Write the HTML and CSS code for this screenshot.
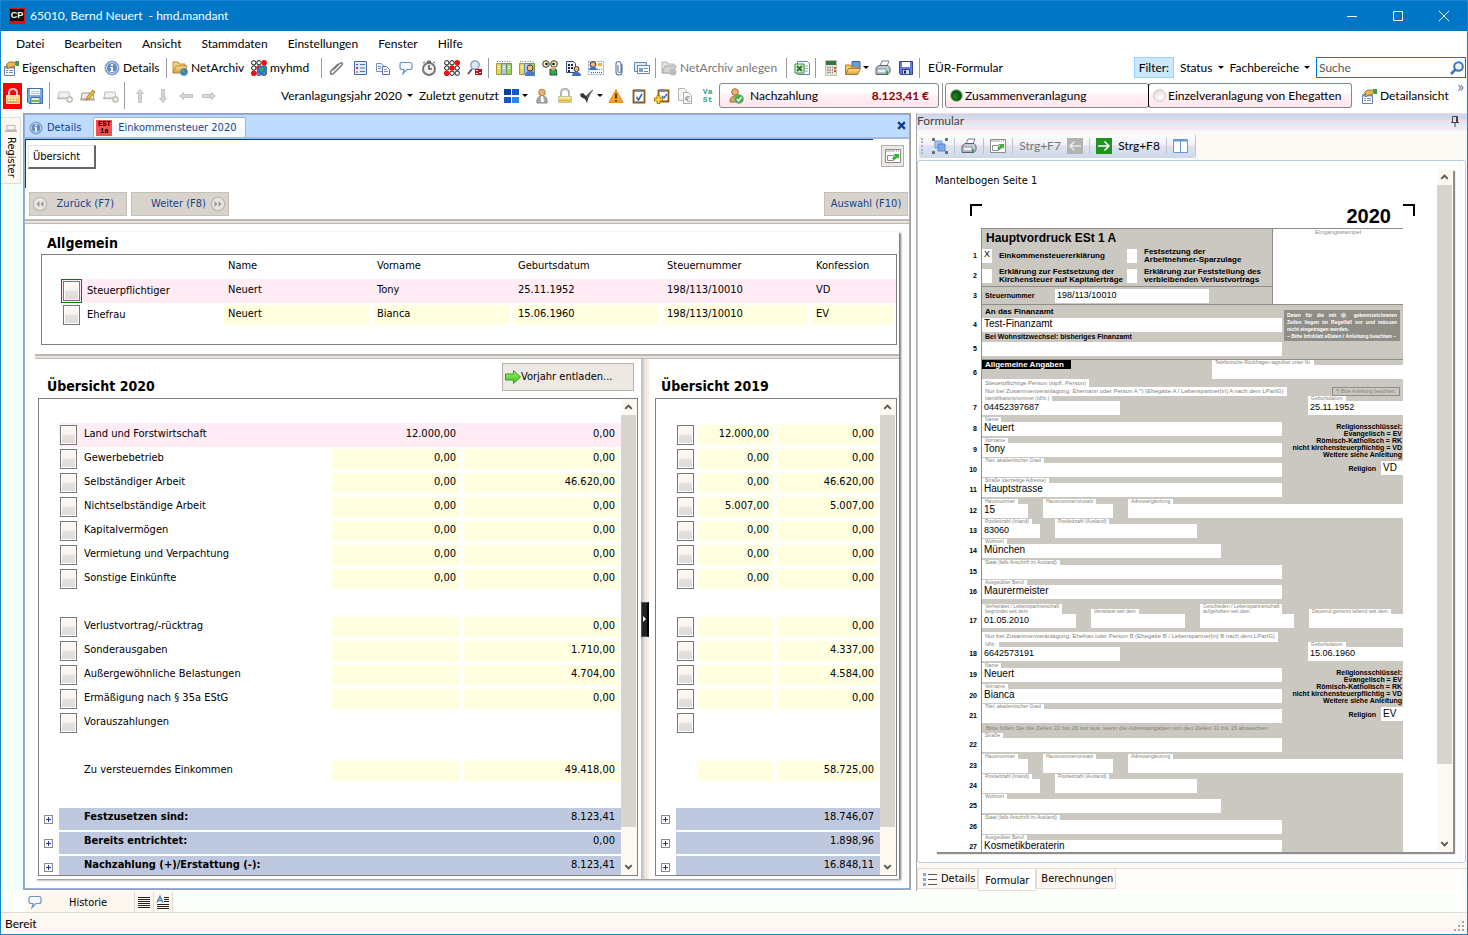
FILE: index.html
```html
<!DOCTYPE html>
<html lang="de">
<head>
<meta charset="utf-8">
<title>65010, Bernd Neuert - hmd.mandant</title>
<link rel="stylesheet" href="styles.css">
</head>
<body>
<svg class="sprite" aria-hidden="true">
  <defs>
    <linearGradient id="g-blue" x1="0" y1="0" x2="0" y2="1"><stop offset="0" stop-color="#8fb4e6"/><stop offset="1" stop-color="#3f6db5"/></linearGradient>
    <linearGradient id="g-gold" x1="0" y1="0" x2="0" y2="1"><stop offset="0" stop-color="#fbe39a"/><stop offset="1" stop-color="#d99f35"/></linearGradient>
    <linearGradient id="g-green" x1="0" y1="0" x2="0" y2="1"><stop offset="0" stop-color="#a5f060"/><stop offset="1" stop-color="#35c525"/></linearGradient>
  </defs>
  <symbol id="props" viewBox="0 0 16 16"><path d="M1.500 6.500h10v9h-10z" fill="#fff" stroke="#6b7f9e"/><path d="M1.500 6.500h10v2h-10z" fill="#7c9cd0"/><path d="M3 10.500h2M3 12.500h2M6 10.500h4M6 12.500h4" stroke="#6d8fc4"/><path d="M3 5l3-3h5l2 2-2 3H7l-2 2-1-1 1-2z" fill="#e8b650" stroke="#8a6425" stroke-width=".8"/><path d="M12 1h4v5h-3z" fill="#3f9a55"/></symbol>
  <symbol id="info" viewBox="0 0 16 16"><circle cx="8" cy="8" r="7" fill="#5f8bc4" stroke="#88a7cf"/><circle cx="8" cy="8" r="5.500" fill="none" stroke="#d7e4f5"/><path d="M7 4h2v2H7zM6 7h3v4h1v1H6v-1h1V8H6z" fill="#fff"/></symbol>
  <symbol id="netarchiv" viewBox="0 0 16 16"><path d="M1 13V2h5l1 2h6v3" fill="#f6d47c" stroke="#b78a35"/><path d="M1 13l3-7h11l-3 7z" fill="url(#g-gold)" stroke="#b78a35"/><circle cx="12" cy="12" r="3.800" fill="#3b7bd0"/><path d="M10 9l3 1-1 2-2 1-1-2zM13 12l2 1-2 2z" fill="#53b04a"/></symbol>
  <symbol id="dice" viewBox="0 0 16 16"><g fill="#fff" stroke="#111"><circle cx="2.800" cy="2.800" r="2.200"/><circle cx="8" cy="2.800" r="2.200"/><circle cx="2.800" cy="8" r="2.200"/><circle cx="13.200" cy="8" r="2.200"/><circle cx="8" cy="13.200" r="2.200"/><circle cx="13.200" cy="13.200" r="2.200"/></g><g fill="#f01010"><circle cx="13.200" cy="2.800" r="2.800"/><circle cx="8" cy="8" r="2.800"/><circle cx="2.800" cy="13.200" r="2.800"/></g></symbol>
  <symbol id="myhmd" viewBox="0 0 16 16"><use href="#dice"/><circle cx="11" cy="10.500" r="5" fill="#2f6fd0"/><path d="M8 8l4-1 1 3-3 2zM12 12l3 0-2 3z" fill="#3ba64a"/></symbol>
  <symbol id="clip" viewBox="0 0 16 16"><path d="M4 10l6-6q2-2 3-1t-1 3l-7 7q-2 2-3 1t0-3l7-7" fill="none" stroke="#777" stroke-width="1.500"/></symbol>
  <symbol id="list" viewBox="0 0 16 16"><path d="M2.500 1.500h12v13h-12z" fill="#e1ebfa" stroke="#4a6ba5"/><path d="M4 4h2v1H4z" fill="#1a4fb0"/><path d="M4 7h2v2H4z" fill="#d33"/><path d="M4 11h2v2H4z" fill="#e8a020"/><path d="M8 4.500h5M8 8h5M8 11.500h5" stroke="#5573a8"/></symbol>
  <symbol id="copy" viewBox="0 0 16 16"><path d="M1.500 3.500h5l2 2v6h-7z" fill="#eef3fb" stroke="#7d94be"/><path d="M7.500 6.500h4l3 3v5h-7z" fill="#f7faff" stroke="#5670a5"/><path d="M9 9.500h3M9 11.500h4M3 6.500h3M3 8.500h3" stroke="#7d94be"/></symbol>
  <symbol id="speech" viewBox="0 0 16 16"><path d="M4 2.500h8q2 0 2 2v3q0 2-2 2H9l-4 4 1-4H4q-2 0-2-2v-3q0-2 2-2z" fill="#f6f9ff" stroke="#6b95c8" stroke-width="1.200"/></symbol>
  <symbol id="watch" viewBox="0 0 16 16"><circle cx="8" cy="9" r="6" fill="#f2f2ee" stroke="#777" stroke-width="2"/><path d="M6.500 1h3v2h-3zM2 3l2-1M14 3l-2-1" stroke="#666" fill="#888"/><path d="M8 5v4h3" fill="none" stroke="#222" stroke-width="1.200"/></symbol>
  <symbol id="find" viewBox="0 0 16 16"><circle cx="8" cy="5" r="4.200" fill="#dbe8f5" stroke="#8a97a8" stroke-width="1.300"/><path d="M5 9l-4 5" stroke="#555" stroke-width="2"/><path d="M8 9h7v6H8z" fill="#c01010"/><path d="M9 10h2v1H9zM12 12h2v1h-2zM9 13h2v1H9z" fill="#fff"/></symbol>
  <symbol id="binders" viewBox="0 0 16 16"><path d="M.500 3.500h5v11h-5z" fill="#e9d552" stroke="#a89a35"/><path d="M5.500 3.500h5v11h-5z" fill="#a8c2ea" stroke="#6d8cc0"/><path d="M10.500 3.500h5v11h-5z" fill="#9fd06c" stroke="#6c9d40"/><path d="M1 1.500h14" stroke="#777" stroke-dasharray="1 1.500"/><path d="M2 6.500h2M2 8.500h2M7 6.500h2M7 8.500h2M12 6.500h2M12 8.500h2" stroke="#fff"/></symbol>
  <symbol id="binders-user" viewBox="0 0 16 16"><use href="#binders"/><circle cx="11" cy="8" r="3" fill="#f0bd8d" stroke="#573618"/><path d="M6 16q0-5 5-5t5 5z" fill="#4a78c8"/></symbol>
  <symbol id="owl" viewBox="0 0 16 16"><circle cx="4" cy="4" r="3.300" fill="#f6efb0" stroke="#333"/><circle cx="12" cy="4" r="3.300" fill="#f6efb0" stroke="#333"/><circle cx="4.500" cy="4" r="1.200"/><circle cx="11.500" cy="4" r="1.200"/><path d="M8 9h6l1 6H8z" fill="#3ba34d" stroke="#176127"/><circle cx="11" cy="8.500" r="2" fill="#e5ad70"/></symbol>
  <symbol id="docs-user" viewBox="0 0 16 16"><path d="M1.500 1.500h7l2 2v9h-9z" fill="#eef3ff" stroke="#334b80"/><path d="M3 4h2v2H3zM6 4h2v2H6zM3 7h2v2H3zM6 7h2v2H6zM3 10h2v2H3z" fill="#20283a"/><circle cx="11.500" cy="9" r="2.500" fill="#e9b98b" stroke="#513014"/><path d="M7 16q0-4 4.500-4T16 16z" fill="#3f6fc4"/></symbol>
  <symbol id="map" viewBox="0 0 16 16"><path d="M.500 1.500h15v13H.500z" fill="#f3f7ff" stroke="#86a4d4" stroke-dasharray="2 1"/><circle cx="5" cy="4.500" r="2.800" fill="#e9b98b" stroke="#402510"/><path d="M1 10q0-3 4-3t4 3z" fill="#3f6fc4"/><path d="M10 3h4v3h-4z" fill="#f0b52c"/><path d="M3 12.500h11" stroke="#c33" stroke-dasharray="1 1"/><path d="M9 9.500h5" stroke="#3a4" stroke-dasharray="1 1"/></symbol>
  <symbol id="clip2" viewBox="0 0 16 16"><path d="M11 4v8q0 3-3 3t-3-3V4q0-2.500 2.500-2.500T10 4v7q0 1.500-1.500 1.500T7 11V5" fill="none" stroke="#667da0" stroke-width="1.200"/></symbol>
  <symbol id="cards" viewBox="0 0 16 16"><path d="M.500 2.500h12v9H.500z" fill="#dfe8f8" stroke="#6583bd"/><path d="M3.500 5.500h12v8h-12z" fill="#fff" stroke="#6583bd"/><path d="M5 8h4v4H5z" fill="#7ea0dc"/><path d="M10 8.500h4M10 11.500h4" stroke="#6583bd"/></symbol>
  <symbol id="folder-off" viewBox="0 0 16 16"><path d="M1 13V2h5l1 2h6v9z" fill="#e3e3e0" stroke="#b5b5b0"/><path d="M1 13l3-7h11l-3 7z" fill="#d4d4d0" stroke="#aaa"/><circle cx="12" cy="12" r="3.500" fill="#bbb"/></symbol>
  <symbol id="excel" viewBox="0 0 16 16"><path d="M3.500 1.500h10l2 2v11h-12z" fill="#fff" stroke="#5c82c0"/><path d="M8 6h6M8 8.500h6M8 11h6" stroke="#8fb08f"/><path d="M1 4h9v9H1z" fill="#e6f4e2" stroke="#3a8a3a"/><path d="M3 6l5 5M8 6l-5 5" stroke="#1f7a28" stroke-width="2"/></symbol>
  <symbol id="calc" viewBox="0 0 16 16"><path d="M2.500.500h11v15h-11z" fill="#e9e5d8" stroke="#c4bfae"/><path d="M3 1h10v4H3z" fill="#2f7a3c"/><path d="M4 7.500h6M4 10h6M4 12.500h6" stroke="#888" stroke-width="1.500" stroke-dasharray="1.500 1"/><path d="M11 7h2v2h-2zM11 10h2v2h-2z" fill="#e05030"/></symbol>
  <symbol id="folder" viewBox="0 0 16 16"><path d="M7 1.500h8v7H7z" fill="#6d9be0" stroke="#3a63a5"/><path d="M.500 14V5h5l1 2h6v7z" fill="#f3cb68" stroke="#a97c25"/><path d="M.500 14.500l3-6h12l-3 6z" fill="url(#g-gold)" stroke="#a97c25"/></symbol>
  <symbol id="printer" viewBox="0 0 16 16"><path d="M5 6l2-5h7l-2 5z" fill="#fff" stroke="#6d7f9d"/><path d="M1 8l3-2.500h9l2 2.500v4l-2 2.500H1z" fill="#c4cbd5" stroke="#59636f"/><path d="M2 9h9v4H2z" fill="#eef1f4" stroke="#8b95a2"/><path d="M11 11h2v3h-2z" fill="#27b53a"/></symbol>
  <symbol id="disk" viewBox="0 0 16 16"><path d="M1.500 1.500h13v13h-12l-1-1z" fill="#5f7fe0" stroke="#3a3f9a"/><path d="M4 2h8v5H4z" fill="#fff"/><path d="M4.500 9.500h7v5h-7z" fill="#d5dcf2" stroke="#3a3f9a"/><path d="M6 10.500h2v3H6z" fill="#223"/></symbol>
  <symbol id="save" viewBox="0 0 16 16"><path d="M.500.500h15v15H2l-1.500-1.500z" fill="#7fa9e0" stroke="#3b6cb4"/><path d="M3 1h10v6H3z" fill="#fff"/><path d="M4 3.500h8M4 5.500h8" stroke="#a6c0e6"/><path d="M4 9.500h9v6H4z" fill="#e8f0dc" stroke="#3b6cb4"/><path d="M5 12h7v2H5z" fill="#76b95c"/></symbol>
  <symbol id="lock" viewBox="0 0 16 16"><path d="M4 8V5q0-4 4-4t4 4v3" fill="none" stroke="#c9c9c9" stroke-width="2"/><path d="M1.500 7.500h13v8h-13z" fill="url(#g-gold)" stroke="#f7e7b0"/><path d="M3 10h10M3 12.500h10" stroke="#fff" stroke-dasharray="2 1"/></symbol>
  <symbol id="lock2" viewBox="0 0 16 16"><path d="M4 8V5q0-4 4-4t4 4v3" fill="none" stroke="#b5b5b5" stroke-width="2"/><path d="M1.500 8.500h13v6h-13z" fill="#f5e58e" stroke="#c4c0ae"/><path d="M2 12.500h12" stroke="#e8b535" stroke-width="2"/></symbol>
  <symbol id="card-add" viewBox="0 0 16 16"><path d="M1 10l1-6h10l1 6z" fill="#f4f2ee" stroke="#c2beb6"/><path d="M0 10.500h13" stroke="#c2beb6" stroke-width="1.500"/><circle cx="12.500" cy="11.500" r="3" fill="#dcd9d3" stroke="#b5b1aa"/><path d="M11 11.500h3M12.500 10v3" stroke="#fff"/></symbol>
  <symbol id="card-edit" viewBox="0 0 16 16"><path d="M1 11l1-6h11l1 6z" fill="#f1eee8" stroke="#9a958c"/><path d="M0 12h15" stroke="#9a958c"/><path d="M6 12l1-3 6-7 2 2-6 7z" fill="#f0b940" stroke="#a36a1a" stroke-width=".8"/></symbol>
  <symbol id="card-del" viewBox="0 0 16 16"><path d="M1 10l1-6h10l1 6z" fill="#f4f2ee" stroke="#c2beb6"/><path d="M0 10.500h13" stroke="#c2beb6" stroke-width="1.500"/><circle cx="12.500" cy="11.500" r="3" fill="#dcd9d3" stroke="#b5b1aa"/><path d="M11 11.500h3" stroke="#fff"/></symbol>
  <symbol id="up" viewBox="0 0 16 16"><path d="M8 1.500l3.500 4H9.500v9h-3v-9h-2z" fill="#d9d7d2" stroke="#c4c1bb"/></symbol>
  <symbol id="down" viewBox="0 0 16 16"><path d="M8 14.500l3.500-4H9.500v-9h-3v9h-2z" fill="#d9d7d2" stroke="#c4c1bb"/></symbol>
  <symbol id="left" viewBox="0 0 16 16"><path d="M1.500 8l4-3.500v2h9v3h-9v2z" fill="#d9d7d2" stroke="#c4c1bb"/></symbol>
  <symbol id="right" viewBox="0 0 16 16"><path d="M14.500 8l-4-3.500v2h-9v3h9v2z" fill="#d9d7d2" stroke="#c4c1bb"/></symbol>
  <symbol id="win" viewBox="0 0 16 16"><path d="M0 1h7v6H0z" fill="#0c3f9c"/><path d="M8 1h7v6H8z" fill="#1459c7"/><path d="M0 9h7v6H0z" fill="#1459c7"/><path d="M8 9h7v6H8z" fill="#2a86ee"/></symbol>
  <symbol id="person" viewBox="0 0 16 16"><path d="M3 15q-1-7 5-7t5 7z" fill="#ababa8" stroke="#888"/><path d="M7 8h2l1 6H7z" fill="#fff"/><circle cx="8" cy="4.500" r="3.300" fill="#e8b27a" stroke="#b5803f"/></symbol>
  <symbol id="check" viewBox="0 0 16 16"><path d="M1 6l3-1 3 3 7-7-5 10-1 4-2-4-4-2z" fill="#333"/><path d="M8 10l6-8" stroke="#8a9a78"/></symbol>
  <symbol id="warn" viewBox="0 0 16 16"><path d="M8 1.500l7 13H1z" fill="#f8a32c" stroke="#e88a22" stroke-linejoin="round"/><path d="M8 5.500v5M8 12v1.500" stroke="#402000" stroke-width="1.600"/></symbol>
  <symbol id="clipboard" viewBox="0 0 16 16"><path d="M2.500 2.500h11v12h-11z" fill="#fff" stroke="#8a5a28" stroke-width="1.800"/><path d="M5 1h6v3H5z" fill="#888"/><path d="M5.500 9l2 3 3.500-6" fill="none" stroke="#2864c8" stroke-width="1.500"/></symbol>
  <symbol id="clipboard-add" viewBox="0 0 16 16"><path d="M4.500 2.500h10v11h-10z" fill="#fff" stroke="#8a5a28" stroke-width="1.800"/><path d="M6 1h6v3H6z" fill="#888"/><path d="M8 8l2 2 3-4" fill="none" stroke="#2864c8" stroke-width="1.300"/><path d="M3 7.500h3v2.500h2.500v3H6v2.500H3V13H.500v-3H3z" fill="#ffd52e" stroke="#a87b10"/></symbol>
  <symbol id="doc-euro" viewBox="0 0 16 16"><path d="M1.500.500h6l2 2v10h-8z" fill="#f4f3f0" stroke="#b9b6b0"/><path d="M6.500 4.500h5l3 3v8h-8z" fill="#f8f7f5" stroke="#b1ada6"/><path d="M13 9q-4-2-4 1.500T13 13M8 10h4M8 11.500h3" fill="none" stroke="#999"/></symbol>
  <symbol id="person-ok" viewBox="0 0 16 16"><path d="M2 14q0-6 5-6t5 6z" fill="#dba767" stroke="#9b6f36"/><circle cx="7" cy="4" r="3.300" fill="#e8b27a" stroke="#a06a30"/><circle cx="11" cy="11" r="4.300" fill="#3fae4a" stroke="#5ab865"/><path d="M9 11l1.500 2 3-4" fill="none" stroke="#fff" stroke-width="1.500"/></symbol>
  <symbol id="search" viewBox="0 0 16 16"><circle cx="9.500" cy="6.500" r="4.300" fill="#e9f3fd" stroke="#3d74ba" stroke-width="2"/><path d="M6.500 9.500L2 14" stroke="#3d74ba" stroke-width="2.500"/></symbol>
  <symbol id="popout" viewBox="0 0 16 16"><path d="M.500 1.500h15v13H.500z" fill="#fff" stroke="#8d8d8d"/><path d="M1 3h9" stroke="#a5a5a5"/><path d="M11 3h1M13 3h1" stroke="#777"/><path d="M2.500 7.500h6v5h-6z" fill="#fff" stroke="#8d8d8d"/><path d="M7 10.500l3-2.500-1.500-2H14v5l-1.500-1.500-3 2.500z" fill="#3fae3a"/></symbol>
  <symbol id="select" viewBox="0 0 16 16"><path d="M3 3h7v7H3z" fill="#a8c6f0" stroke="#6f9adb"/><path d="M6 6h7v7H6z" fill="#7da8e8" stroke="#5685d0"/><path d="M.500.500h2v2h-2zM13.500.500h2v2h-2zM.500 13.500h2v2h-2zM13.500 13.500h2v2h-2z" fill="#777" stroke="#333" stroke-width=".6"/></symbol>
  <symbol id="sq-left" viewBox="0 0 16 16"><path d="M0 0h16v16H0z" fill="#b2b2b2"/><path d="M14 8H3M7.500 3.500L3 8l4.500 4.500" fill="none" stroke="#e8e8e8" stroke-width="1.600"/></symbol>
  <symbol id="sq-right" viewBox="0 0 16 16"><path d="M0 0h16v16H0z" fill="#1f931f"/><path d="M2 8h11M8.500 3.500L13 8l-4.500 4.500" fill="none" stroke="#fff" stroke-width="1.600"/></symbol>
  <symbol id="columns" viewBox="0 0 16 16"><path d="M.500 1.500h14v13H.500z" fill="#fff" stroke="#6c95d4"/><path d="M0 2.500h15" stroke="#6c95d4" stroke-width="2"/><path d="M7.500 3v12" stroke="#6c95d4"/></symbol>
  <symbol id="rew" viewBox="0 0 16 16"><circle cx="8" cy="8" r="6.800" fill="#e6e4e0" stroke="#bdbab4" stroke-width="1.300"/><path d="M7.500 5v6L4.500 8zM11.500 5v6l-3-3z" fill="#999"/></symbol>
  <symbol id="fwd" viewBox="0 0 16 16"><circle cx="8" cy="8" r="6.800" fill="#e6e4e0" stroke="#bdbab4" stroke-width="1.300"/><path d="M4.500 5v6l3-3zM8.500 5v6l3-3z" fill="#999"/></symbol>
  <symbol id="go" viewBox="0 0 16 16"><path d="M.500 5h8V1.500L15.500 8l-7 6.500V11h-8z" fill="url(#g-green)" stroke="#3a9a2a"/></symbol>
  <symbol id="chev-up" viewBox="0 0 16 16"><path d="M4.500 10L8 6.500l3.500 3.500" fill="none" stroke="#555" stroke-width="2"/></symbol>
  <symbol id="chev-down" viewBox="0 0 16 16"><path d="M4.500 6L8 9.500 11.500 6" fill="none" stroke="#555" stroke-width="2"/></symbol>
  <symbol id="bullets" viewBox="0 0 16 16"><path d="M1 2h3v3H1zM1 7h3v3H1zM1 12h3v3H1z" fill="#7fa8e8"/><path d="M6 3.500h9M6 8.500h9M6 13.500h9" stroke="#555"/></symbol>
  <symbol id="lines" viewBox="0 0 16 16"><path d="M2 3.500h12M2 5.500h12M2 7.500h12M2 9.500h12M2 11.500h12M2 13.500h12" stroke="#222"/></symbol>
  <symbol id="lines-a" viewBox="0 0 16 16"><path d="M2 8.500L5 2.500l3 6M3.500 6.500h3" fill="none" stroke="#4f86c6" stroke-width="1.500"/><path d="M9 3.500h5M9 5.500h5M9 7.500h5M2 10.500h12M2 12.500h12M2 14.500h12" stroke="#222"/></symbol>
  <symbol id="pin" viewBox="0 0 16 16"><path d="M5.500 3.500h5v6h-5zM4 9.500h8M8 10v4M9.500 4v5" fill="none" stroke="#444"/></symbol>
  <symbol id="tray" viewBox="0 0 16 16"><path d="M2.500 4.500h11v6h-11z" fill="#f7f5f2" stroke="#aaa6a0"/><path d="M0 12h16" stroke="#aaa6a0" stroke-width="2"/></symbol>
</svg>

<div class="window">
  <header class="titlebar">
    <span class="logo">CP</span>
    <h1 class="title">65010, Bernd Neuert&nbsp; - hmd.mandant</h1>
    <div class="win-buttons">
      <button aria-label="Minimieren"><svg viewBox="0 0 10 10"><path d="M0 5.500h10" stroke="#fff"/></svg></button>
      <button aria-label="Maximieren"><svg viewBox="0 0 10 10"><path d="M.500.500h9v9h-9z" fill="none" stroke="#fff"/></svg></button>
      <button aria-label="Schließen"><svg viewBox="0 0 10 10"><path d="M0 0l10 10M10 0L0 10" stroke="#fff"/></svg></button>
    </div>
  </header>

  <nav class="menubar">
    <button>Datei</button><button>Bearbeiten</button><button>Ansicht</button><button>Stammdaten</button><button>Einstellungen</button><button>Fenster</button><button>Hilfe</button>
  </nav>

  <div class="toolbar tb1">
    <button class="tool"><svg><use href="#props"/></svg>Eigenschaften</button>
    <button class="tool"><svg><use href="#info"/></svg>Details</button>
    <button class="tool sep"><svg><use href="#netarchiv"/></svg>NetArchiv</button>
    <button class="tool"><svg><use href="#myhmd"/></svg>myhmd</button>
    <div class="icons sep">
      <button aria-label="Anlage"><svg><use href="#clip"/></svg></button>
      <button aria-label="Liste"><svg><use href="#list"/></svg></button>
      <button aria-label="Kopieren"><svg><use href="#copy"/></svg></button>
      <button aria-label="Notiz"><svg><use href="#speech"/></svg></button>
      <button aria-label="Zeit"><svg><use href="#watch"/></svg></button>
      <button aria-label="hmd"><svg><use href="#dice"/></svg></button>
      <button aria-label="Suchen"><svg><use href="#find"/></svg></button>
    </div>
    <div class="icons sep">
      <button aria-label="Ordner"><svg><use href="#binders"/></svg></button>
      <button aria-label="Mandantenordner"><svg><use href="#binders-user"/></svg></button>
      <button aria-label="Beobachten"><svg><use href="#owl"/></svg></button>
      <button aria-label="Personaldaten"><svg><use href="#docs-user"/></svg></button>
      <button aria-label="Adressen"><svg><use href="#map"/></svg></button>
      <button aria-label="Anhang"><svg><use href="#clip2"/></svg></button>
      <button aria-label="Karten"><svg><use href="#cards"/></svg></button>
    </div>
    <button class="tool sep" disabled><svg><use href="#folder-off"/></svg>NetArchiv anlegen</button>
    <div class="icons sep"><button aria-label="Excel"><svg><use href="#excel"/></svg></button></div>
    <div class="icons sep">
      <button aria-label="Rechner"><svg><use href="#calc"/></svg></button>
      <button class="drop" aria-label="Öffnen"><svg><use href="#folder"/></svg></button>
      <button aria-label="Drucken"><svg><use href="#printer"/></svg></button>
      <button aria-label="Speichern"><svg><use href="#disk"/></svg></button>
    </div>
    <button class="tool sep plain">EÜR-Formular</button>
    <div class="filters">
      <button class="filter">Filter:</button>
      <button class="drop">Status</button>
      <button class="drop">Fachbereiche</button>
      <label class="search"><input type="text" placeholder="Suche" aria-label="Suche"><svg><use href="#search"/></svg></label>
    </div>
  </div>

  <div class="toolbar tb2">
    <div class="first">
      <button class="lock" aria-label="Gesperrt"><svg><use href="#lock"/></svg></button>
      <button aria-label="Speichern"><svg><use href="#save"/></svg></button>
    </div>
    <div class="icons sep">
      <button aria-label="Neu"><svg><use href="#card-add"/></svg></button>
      <button aria-label="Ändern"><svg><use href="#card-edit"/></svg></button>
      <button aria-label="Löschen"><svg><use href="#card-del"/></svg></button>
    </div>
    <div class="icons sep">
      <button aria-label="Hoch"><svg><use href="#up"/></svg></button>
      <button aria-label="Runter"><svg><use href="#down"/></svg></button>
      <button aria-label="Links"><svg><use href="#left"/></svg></button>
      <button aria-label="Rechts"><svg><use href="#right"/></svg></button>
    </div>
    <button class="tool drop">Veranlagungsjahr 2020</button>
    <button class="tool">Zuletzt genutzt</button>
    <div class="icons tight">
      <button class="drop" aria-label="Ansicht"><svg><use href="#win"/></svg></button>
      <button aria-label="Person"><svg><use href="#person"/></svg></button>
      <button aria-label="Sperre"><svg><use href="#lock2"/></svg></button>
      <button class="drop" aria-label="Prüfen"><svg><use href="#check"/></svg></button>
      <button aria-label="Warnung"><svg><use href="#warn"/></svg></button>
      <button aria-label="Checkliste"><svg><use href="#clipboard"/></svg></button>
      <button aria-label="Checkliste neu"><svg><use href="#clipboard-add"/></svg></button>
      <button aria-label="Beleg"><svg><use href="#doc-euro"/></svg></button>
      <button class="vast" aria-label="VaSt">Va<br>St</button>
    </div>
    <button class="result"><svg><use href="#person-ok"/></svg><span>Nachzahlung</span><b>8.123,41 €</b></button>
    <div class="modes">
      <label><input type="radio" name="mode" checked>Zusammenveranlagung</label>
      <label><input type="radio" name="mode">Einzelveranlagung von Ehegatten</label>
    </div>
    <button class="tool detail"><svg><use href="#props"/></svg>Detailansicht</button>
    <span class="more">»</span>
  </div>

  <main class="work">
    <aside class="rail">
      <button class="register"><svg><use href="#tray"/></svg><span>Register</span></button>
    </aside>

    <section class="center">
      <div class="tabs">
        <button class="tab"><svg><use href="#info"/></svg>Details</button>
        <button class="tab active"><span class="est">EST<br>1a</span>Einkommensteuer 2020</button>
        <button class="close" aria-label="Schließen"><svg viewBox="0 0 8 8"><path d="M1 1l6 6M7 1L1 7" stroke="#0c3a8c" stroke-width="2"/></svg></button>
      </div>
      <div class="doc-head">
        <div class="head-line">
          <button class="raised">Übersicht</button>
          <button class="pop" aria-label="In neuem Fenster"><svg><use href="#popout"/></svg></button>
        </div>
        <div class="steps">
          <button><svg><use href="#rew"/></svg><span>Zurück (F7)</span></button>
          <button><span>Weiter (F8)</span><svg><use href="#fwd"/></svg></button>
          <button class="choose">Auswahl (F10)</button>
        </div>
      </div>
      <div class="bar"></div>
      <div class="sheet">
        <div class="general">
          <h2>Allgemein</h2>
          <div class="box">
            <table class="persons">
              <colgroup><col class="c-lead"><col class="c-a"><col class="c-b"><col class="c-a"><col class="c-a"><col></colgroup>
              <thead><tr><th></th><th>Name</th><th>Vorname</th><th>Geburtsdatum</th><th>Steuernummer</th><th>Konfession</th></tr></thead>
              <tbody>
                <tr class="hot"><th><span class="lead"><button class="sq focus" aria-label="Steuerpflichtiger öffnen"></button>Steuerpflichtiger</span></th><td>Neuert</td><td>Tony</td><td>25.11.1952</td><td>198/113/10010</td><td>VD</td></tr>
                <tr><th><span class="lead"><button class="sq" aria-label="Ehefrau öffnen"></button>Ehefrau</span></th><td>Neuert</td><td>Bianca</td><td>15.06.1960</td><td>198/113/10010</td><td>EV</td></tr>
              </tbody>
            </table>
          </div>
        </div>
        <div class="bar"></div>
        <div class="split">
          <div class="pane">
            <div class="pane-head"><h2>Übersicht 2020</h2><button class="unload"><svg><use href="#go"/></svg>Vorjahr entladen...</button></div>
            <div class="box scroll">
              <div class="clip">
              <table class="figures">
                <colgroup><col class="c-plus"><col class="c-sq"><col><col class="c-v1"><col class="c-v2"></colgroup>
                <tbody>
                <tr class="hot"><td></td><td><button class="sq" aria-label="Öffnen"></button></td><th>Land und Forstwirtschaft</th><td>12.000,00</td><td>0,00</td></tr>
                <tr><td></td><td><button class="sq" aria-label="Öffnen"></button></td><th>Gewerbebetrieb</th><td>0,00</td><td>0,00</td></tr>
                <tr><td></td><td><button class="sq" aria-label="Öffnen"></button></td><th>Selbständiger Arbeit</th><td>0,00</td><td>46.620,00</td></tr>
                <tr><td></td><td><button class="sq" aria-label="Öffnen"></button></td><th>Nichtselbständige Arbeit</th><td>0,00</td><td>0,00</td></tr>
                <tr><td></td><td><button class="sq" aria-label="Öffnen"></button></td><th>Kapitalvermögen</th><td>0,00</td><td>0,00</td></tr>
                <tr><td></td><td><button class="sq" aria-label="Öffnen"></button></td><th>Vermietung und Verpachtung</th><td>0,00</td><td>0,00</td></tr>
                <tr><td></td><td><button class="sq" aria-label="Öffnen"></button></td><th>Sonstige Einkünfte</th><td>0,00</td><td>0,00</td></tr>
                <tr class="empty"><td colspan="5"></td></tr>
                <tr><td></td><td><button class="sq" aria-label="Öffnen"></button></td><th>Verlustvortrag/-rücktrag</th><td></td><td>0,00</td></tr>
                <tr><td></td><td><button class="sq" aria-label="Öffnen"></button></td><th>Sonderausgaben</th><td></td><td>1.710,00</td></tr>
                <tr><td></td><td><button class="sq" aria-label="Öffnen"></button></td><th>Außergewöhnliche Belastungen</th><td></td><td>4.704,00</td></tr>
                <tr><td></td><td><button class="sq" aria-label="Öffnen"></button></td><th>Ermäßigung nach § 35a EStG</th><td></td><td>0,00</td></tr>
                <tr class="blank"><td></td><td><button class="sq" aria-label="Öffnen"></button></td><th>Vorauszahlungen</th><td></td><td></td></tr>
                <tr class="empty"><td colspan="5"></td></tr>
                <tr><td></td><td></td><th>Zu versteuerndes Einkommen</th><td></td><td>49.418,00</td></tr>
                <tr class="empty"><td colspan="5"></td></tr>
                <tr class="sum"><td><button class="plus" aria-label="Aufklappen"></button></td><td></td><th>Festzusetzen sind:</th><td></td><td>8.123,41</td></tr>
                <tr class="sum"><td><button class="plus" aria-label="Aufklappen"></button></td><td></td><th>Bereits entrichtet:</th><td></td><td>0,00</td></tr>
                <tr class="sum"><td><button class="plus" aria-label="Aufklappen"></button></td><td></td><th>Nachzahlung (+)/Erstattung (-):</th><td></td><td>8.123,41</td></tr>
                </tbody>
              </table>
              </div>
              <div class="scrollbar"><svg><use href="#chev-up"/></svg><i class="thumb"></i><svg><use href="#chev-down"/></svg></div>
            </div>
          </div>
          <div class="vbar"><button aria-label="Einklappen"></button></div>
          <div class="pane second">
            <div class="pane-head"><h2>Übersicht 2019</h2></div>
            <div class="box scroll">
              <div class="clip">
              <table class="figures">
                <colgroup><col class="c-plus"><col class="c-sq"><col class="c-v3"><col></colgroup>
                <tbody>
                <tr><td></td><td><button class="sq" aria-label="Öffnen"></button></td><td>12.000,00</td><td>0,00</td></tr>
                <tr><td></td><td><button class="sq" aria-label="Öffnen"></button></td><td>0,00</td><td>0,00</td></tr>
                <tr><td></td><td><button class="sq" aria-label="Öffnen"></button></td><td>0,00</td><td>46.620,00</td></tr>
                <tr><td></td><td><button class="sq" aria-label="Öffnen"></button></td><td>5.007,00</td><td>5.007,00</td></tr>
                <tr><td></td><td><button class="sq" aria-label="Öffnen"></button></td><td>0,00</td><td>0,00</td></tr>
                <tr><td></td><td><button class="sq" aria-label="Öffnen"></button></td><td>0,00</td><td>0,00</td></tr>
                <tr><td></td><td><button class="sq" aria-label="Öffnen"></button></td><td>0,00</td><td>0,00</td></tr>
                <tr class="empty"><td colspan="4"></td></tr>
                <tr><td></td><td><button class="sq" aria-label="Öffnen"></button></td><td></td><td>0,00</td></tr>
                <tr><td></td><td><button class="sq" aria-label="Öffnen"></button></td><td></td><td>4.337,00</td></tr>
                <tr><td></td><td><button class="sq" aria-label="Öffnen"></button></td><td></td><td>4.584,00</td></tr>
                <tr><td></td><td><button class="sq" aria-label="Öffnen"></button></td><td></td><td>0,00</td></tr>
                <tr class="blank"><td></td><td><button class="sq" aria-label="Öffnen"></button></td><td></td><td></td></tr>
                <tr class="empty"><td colspan="4"></td></tr>
                <tr><td></td><td></td><td></td><td>58.725,00</td></tr>
                <tr class="empty"><td colspan="4"></td></tr>
                <tr class="sum"><td><button class="plus" aria-label="Aufklappen"></button></td><td></td><td></td><td>18.746,07</td></tr>
                <tr class="sum"><td><button class="plus" aria-label="Aufklappen"></button></td><td></td><td></td><td>1.898,96</td></tr>
                <tr class="sum"><td><button class="plus" aria-label="Aufklappen"></button></td><td></td><td></td><td>16.848,11</td></tr>
                </tbody>
              </table>
              </div>
              <div class="scrollbar"><svg><use href="#chev-up"/></svg><i class="thumb"></i><svg><use href="#chev-down"/></svg></div>
            </div>
          </div>
        </div>
      </div>
    </section>

    <section class="side">
      <div class="side-title"><span>Formular</span><svg><use href="#pin"/></svg></div>
      <div class="side-tools">
        <div class="strip">
          <i class="grip"></i>
          <button aria-label="Auswahl"><svg><use href="#select"/></svg></button>
          <button aria-label="Drucken"><svg><use href="#printer"/></svg></button>
          <button aria-label="Neues Fenster"><svg><use href="#popout"/></svg></button>
          <button class="key" disabled>Strg+F7<svg><use href="#sq-left"/></svg></button>
          <button class="key"><svg><use href="#sq-right"/></svg>Strg+F8</button>
          <button aria-label="Spalten"><svg><use href="#columns"/></svg></button>
        </div>
      </div>
      <div class="viewer">
        <div class="preview">
          <div class="page">
            <p class="page-name">Mantelbogen Seite 1</p>
            <div class="paper">
              <div class="paper-top"><i class="crop"></i><strong>2020</strong><i class="crop end"></i></div>
              <div class="f-head">
                <div class="f-title">
                  <h3>Hauptvordruck ESt 1 A</h3>
                  <div class="opts"><span class="no">1</span><i class="tick">X</i><b>Einkommensteuererklärung</b><i class="tick"></i><b>Festsetzung der<br>Arbeitnehmer-Sparzulage</b></div>
                  <div class="opts"><span class="no">2</span><i class="tick"></i><b>Erklärung zur Festsetzung der<br>Kirchensteuer auf Kapitalerträge</b><i class="tick"></i><b>Erklärung zur Feststellung des<br>verbleibenden Verlustvortrags</b></div>
                  <div class="taxno"><span class="no">3</span><b>Steuernummer</b><span class="val num">198/113/10010</span></div>
                </div>
                <div class="stamp">Eingangsstempel</div>
              </div>
              <div class="office">
                <div class="office-main">
                  <b class="o1">An das Finanzamt</b>
                  <div class="line"><span class="no">4</span><span class="val">Test-Finanzamt</span></div>
                  <b class="o2">Bei Wohnsitzwechsel: bisheriges Finanzamt</b>
                  <div class="line"><span class="no">5</span><span class="val"></span></div>
                </div>
                <div class="hint"><p>Daten für die mit <b>ⓔ</b> gekennzeichneten</p><p>Zeilen liegen im Regelfall vor und müssen</p>nicht eingetragen werden.<br>– Bitte Infoblatt eDaten / Anleitung beachten –</div>
              </div>
              <div class="part">
                <b class="part-name">Allgemeine Angaben</b>
                <span class="no">6</span>
                <div class="fld phone"><small>Telefonische Rückfragen tagsüber unter Nr.</small><span class="val"></span></div>
              </div>
              <div class="notes">
                <span class="note">Steuerpflichtige Person (stpfl. Person)</span>
                <span class="note">Nur bei Zusammenveranlagung: Ehemann oder Person A *) (Ehegatte A / Lebenspartner[in] A nach dem LPartG)</span>
                <span class="note framed">*) Bitte Anleitung beachten.</span>
              </div>
              <div class="rows">
                <div class="row"><span class="no">7</span><div class="fld w138"><small>Identifikationsnummer (IdNr.)</small><span class="val num">04452397687</span></div><div class="fld last"><small>Geburtsdatum</small><span class="val num">25.11.1952</span></div></div>
              </div>
              <div class="person">
                <div class="rows">
                  <div class="row"><span class="no">8</span><div class="fld full"><small>Name</small><span class="val">Neuert</span></div></div>
                  <div class="row"><span class="no">9</span><div class="fld full"><small>Vorname</small><span class="val">Tony</span></div></div>
                  <div class="row"><span class="no">10</span><div class="fld full"><small>Titel, akademischer Grad</small><span class="val"></span></div></div>
                </div>
                <div class="creed"><p>Religionsschlüssel:<br>Evangelisch = EV<br>Römisch-Katholisch = RK<br>nicht kirchensteuerpflichtig = VD<br>Weitere siehe Anleitung</p><div>Religion <span class="val">VD</span></div></div>
              </div>
              <div class="rows">
                <div class="row"><span class="no">11</span><div class="fld w300"><small>Straße (derzeitige Adresse)</small><span class="val">Hauptstrasse</span></div></div>
                <div class="row"><span class="no">12</span><div class="fld w46"><small>Hausnummer</small><span class="val">15</span></div><div class="fld w70"><small>Hausnummernzusatz</small><span class="val"></span></div><div class="fld full"><small>Adressergänzung</small><span class="val"></span></div></div>
                <div class="row"><span class="no">13</span><div class="fld w58"><small>Postleitzahl (Inland)</small><span class="val num">83060</span></div><div class="fld w142"><small>Postleitzahl (Ausland)</small><span class="val"></span></div></div>
                <div class="row"><span class="no">14</span><div class="fld w239"><small>Wohnort</small><span class="val">München</span></div></div>
                <div class="row"><span class="no">15</span><div class="fld w300"><small>Staat (falls Anschrift im Ausland)</small><span class="val"></span></div></div>
                <div class="row"><span class="no">16</span><div class="fld w300"><small>Ausgeübter Beruf</small><span class="val">Maurermeister</span></div></div>
              </div>
              <div class="row tall"><span class="no">17</span><div class="fld w94"><small>Verheiratet / Lebenspartnerschaft<br>begründet seit dem</small><span class="val num">01.05.2010</span></div><div class="fld w94"><small>Verwitwet seit dem</small><span class="val"></span></div><div class="fld w94"><small>Geschieden / Lebenspartnerschaft<br>aufgehoben seit dem</small><span class="val"></span></div><div class="fld full"><small>Dauernd getrennt lebend seit dem</small><span class="val"></span></div></div>
              <div class="notes single"><span class="note">Nur bei Zusammenveranlagung: Ehefrau oder Person B (Ehegatte B / Lebenspartner[in] B nach dem LPartG)</span></div>
              <div class="rows">
                <div class="row"><span class="no">18</span><div class="fld w138"><small>IdNr.</small><span class="val num">6642573191</span></div><div class="fld last"><small>Geburtsdatum</small><span class="val num">15.06.1960</span></div></div>
              </div>
              <div class="person">
                <div class="rows">
                  <div class="row"><span class="no">19</span><div class="fld full"><small>Name</small><span class="val">Neuert</span></div></div>
                  <div class="row"><span class="no">20</span><div class="fld full"><small>Vorname</small><span class="val">Bianca</span></div></div>
                  <div class="row"><span class="no">21</span><div class="fld full"><small>Titel, akademischer Grad</small><span class="val"></span></div></div>
                </div>
                <div class="creed"><p>Religionsschlüssel:<br>Evangelisch = EV<br>Römisch-Katholisch = RK<br>nicht kirchensteuerpflichtig = VD<br>Weitere siehe Anleitung</p><div>Religion <span class="val">EV</span></div></div>
              </div>
              <div class="remark">Bitte füllen Sie die Zeilen 22 bis 26 nur aus, wenn die Adressangaben von den Zeilen 11 bis 15 abweichen.</div>
              <div class="rows">
                <div class="row"><span class="no">22</span><div class="fld w300"><small>Straße</small><span class="val"></span></div></div>
                <div class="row"><span class="no">23</span><div class="fld w46"><small>Hausnummer</small><span class="val"></span></div><div class="fld w70"><small>Hausnummernzusatz</small><span class="val"></span></div><div class="fld full"><small>Adressergänzung</small><span class="val"></span></div></div>
                <div class="row"><span class="no">24</span><div class="fld w58"><small>Postleitzahl (Inland)</small><span class="val"></span></div><div class="fld w142"><small>Postleitzahl (Ausland)</small><span class="val"></span></div></div>
                <div class="row"><span class="no">25</span><div class="fld w239"><small>Wohnort</small><span class="val"></span></div></div>
                <div class="row"><span class="no">26</span><div class="fld w300"><small>Staat (falls Anschrift im Ausland)</small><span class="val"></span></div></div>
                <div class="row"><span class="no">27</span><div class="fld w300"><small>Ausgeübter Beruf</small><span class="val">Kosmetikberaterin</span></div></div>
              </div>
            </div>
          </div>
          <div class="scrollbar long"><svg><use href="#chev-up"/></svg><i class="thumb"></i><svg><use href="#chev-down"/></svg></div>
        </div>
      </div>
      <div class="side-tabs">
        <button><svg><use href="#bullets"/></svg>Details</button>
        <button class="active">Formular</button>
        <button>Berechnungen</button>
      </div>
    </section>
  </main>

  <div class="history">
    <button class="hist"><svg><use href="#speech"/></svg><span>Historie</span></button>
    <button aria-label="Liste"><svg><use href="#lines"/></svg></button>
    <button aria-label="Text"><svg><use href="#lines-a"/></svg></button>
  </div>
  <footer class="status"><span>Bereit</span>
    <svg viewBox="0 0 12 12"><path d="M9 1h2v2H9zM5 5h2v2H5zM9 5h2v2H9zM1 9h2v2H1zM5 9h2v2H5zM9 9h2v2H9z" fill="#a8a49e"/></svg>
  </footer>
</div>
</body>
</html>
```

FILE: styles.css
```css
* { box-sizing: border-box; }
body {
  margin: 0;
  font: 12px/16px Lato, "Open Sans", "Noto Sans", sans-serif;
  color: #000;
}
button {
  margin: 0;
  padding: 0;
  border: 0;
  background: none;
  font: inherit;
  color: inherit;
  white-space: nowrap;
}
svg { display: block; width: 16px; height: 16px; flex: none; }
h1, h2, h3, p { margin: 0; }
.sprite { position: absolute; width: 0; height: 0; }

.window {
  display: flex;
  flex-direction: column;
  height: 100vh;
  overflow: hidden;
  border: 1px solid #1883cf;
  border-top-color: #1a82cb;
  background: #fff;
}

/* title and menu */
.titlebar {
  display: flex;
  align-items: center;
  flex: none;
  height: 30px;
  padding-left: 8px;
  background: #0076c6;
  color: #fff;
}
.logo {
  width: 16px;
  height: 16px;
  border: 1px solid #e01010;
  border-bottom-width: 3px;
  background: #111;
  font: bold 9px/12px "Liberation Sans", sans-serif;
  text-align: center;
}
.title { margin-left: 5px; font-size: 12px; font-weight: normal; }
.win-buttons { display: flex; margin-left: auto; }
.win-buttons button { display: grid; place-items: center; width: 46px; height: 30px; }
.win-buttons svg { width: 10px; height: 10px; }
.menubar { display: flex; flex: none; height: 24px; padding-left: 5px; }
.menubar button { padding: 1px 10px 0; }

/* toolbars */
.toolbar { display: grid; flex: none; align-items: center; }
.tb1 {
  height: 25px;
  padding-left: 2px;
  grid-template-columns: 101px 62px 85px 70px 167px 167px 131px 29px 104px 1fr auto;
}
.tb2 {
  height: 33px;
  padding-bottom: 2px;
  grid-template-columns: 48px 75px 157px 138px 83px 217px 220px 422px auto 1fr;
}
.sep { border-left: 1px solid #9a9a9a; }
.tool { display: flex; align-items: center; gap: 3px; height: 20px; }
.tool.sep { padding-left: 5px; }
.tool.plain { padding-left: 8px; }
.tool:disabled { color: #777; }
.icons { display: flex; align-items: center; height: 20px; padding-left: 3px; }
.icons button { display: flex; align-items: center; justify-content: center; width: 23px; height: 20px; }
.tb2 .sep { height: 27px; }
.drop::after {
  content: "";
  margin-left: 5px;
  border: 3px solid transparent;
  border-top-color: #000;
  border-bottom: 0;
}
.icons .drop { width: 29px; }
.icons .drop::after { margin-left: 2px; }
.filters { display: flex; align-items: center; gap: 6px; height: 22px; padding-right: 1px; }
.filters .drop { display: flex; align-items: center; }
.filter { width: 40px; height: 21px; border: 1px solid #99d1ff; background: #cce8ff; }
.search {
  display: flex;
  align-items: center;
  width: 150px;
  height: 21px;
  border: 1px solid #0078d7;
}
.search input { flex: 1; min-width: 0; padding: 0 2px; border: 0; outline: 0; font: inherit; }
.search input::placeholder { color: #555; }
.first { display: flex; align-items: center; gap: 5px; padding-left: 2px; }
.lock { display: grid; place-items: center; width: 19px; height: 26px; background: #f00; }
.tb2 .tool.drop { gap: 0; }
.icons.tight { padding-left: 0; }
.vast { color: #2a9d8f; font: bold 8px/8px "Liberation Mono", monospace; }
.result, .modes label {
  height: 25px;
  border: 1px solid #888;
  background: linear-gradient(#f8fff8, #fff 30%, #fff0f5 55%, #ffe6ee);
}
.result { display: flex; align-items: center; gap: 6px; padding: 0 9px 0 8px; border-radius: 3px; }
.result b { margin-left: auto; color: #8b0000; }
.modes { display: flex; margin-left: 3px; padding: 0 9px 0 2px; border-left: 1px solid #999; white-space: nowrap; }
.modes label { display: flex; align-items: center; flex: 1 1 0; gap: 2px; padding-left: 4px; border-radius: 3px; }
.modes label + label { margin-left: -1px; border-left-color: #000; }
.modes input {
  appearance: none;
  flex: none;
  width: 13px;
  height: 13px;
  margin: 0;
  border: 1px solid #ccc;
  border-radius: 50%;
  background: radial-gradient(circle at 60% 70%, #fff, #ddd8d0);
}
.modes input:checked { border-color: #9bc29b; background: radial-gradient(circle at 40% 60%, #1f8b1f, #0a4f0a 60%, #9ccf9c); }
.more { align-self: start; justify-self: end; margin-right: 3px; color: #6a6aa0; font-size: 16px; line-height: 12px; }

/* work area */
.work {
  display: grid;
  flex: 1;
  min-height: 0;
  grid-template-columns: 22px minmax(0, 888fr) 5px minmax(0, 551fr);
  grid-template-rows: minmax(0, 1fr);
}
.rail { padding-top: 4px; background: #f5fffa; }
.register {
  display: flex;
  flex-direction: column;
  align-items: center;
  gap: 3px;
  width: 20px;
  padding: 4px 0 5px;
  border: 1px solid #e2ddd6;
  border-left: 0;
  background: #fff8f2;
}
.register span { writing-mode: vertical-rl; line-height: 14px; }
.register svg { height: 12px; }

.center, .viewer, .side-tabs, .register {
  font-family: "DejaVu Sans Condensed", "Noto Sans", sans-serif;
  font-size: 11px;
}
.center {
  display: flex;
  flex-direction: column;
  border: 1px solid #a0a0a0;
  outline: 1px solid #8fb0e4;
  outline-offset: -2px;
  margin-bottom: 1px;
  padding: 0 1px 1px;
}
.tabs {
  display: flex;
  align-items: flex-end;
  flex: none;
  height: 25px;
  background: #bfdbff;
  border-bottom: 2px solid #9dbbe4;
  color: #15428b;
}
.tab { display: flex; align-items: center; gap: 4px; height: 20px; padding: 2px 12px 0 4px; }
.tab svg { width: 14px; }
.tab.active {
  gap: 6px;
  padding: 1px 8px 0 2px;
  border: 1px solid #8fb8ee;
  border-bottom: 0;
  border-radius: 2px 2px 0 0;
  background: linear-gradient(#fff, #f4f8ff);
}
.est { width: 16px; background: #f55050; color: #000; font: bold 7px/7px "Liberation Mono", monospace; text-align: center; padding: 1px 0; }
.close { margin: 0 3px 7px auto; }
.close svg { width: 9px; height: 9px; }
.doc-head { flex: none; height: 80px; }
.head-line {
  display: flex;
  justify-content: space-between;
  height: 49px;
  padding: 6px 5px 0 2px;
  border-left: 1px solid #0c3a80;
  background: linear-gradient(#0c3a80, #0c3a80) left top / calc(100% - 36px) 1px no-repeat;
}
.raised {
  width: 68px;
  height: 24px;
  padding-right: 10px;
  border: 1px solid #e6e1da;
  border-right: 2px solid #666;
  border-bottom: 2px solid #666;
}
.pop { display: grid; place-items: center; width: 23px; height: 22px; border: 1px solid #b5b1aa; background: #ece9e4; }
.steps { display: flex; gap: 4px; padding: 4px 1px 0 4px; }
.steps button {
  display: flex;
  align-items: center;
  justify-content: space-between;
  width: 98px;
  height: 24px;
  padding: 0 12px 0 2px;
  border: 1px solid #c4c0b8;
  background: #d8d4cd;
  color: #15428b;
}
.steps button:nth-child(2) { padding: 0 2px 0 19px; }
.steps .choose { justify-content: center; width: 84px; margin-left: auto; padding: 0; }
.bar {
  flex: none;
  height: 5px;
  border-top: 2px solid #bcb8b4;
  border-bottom: 1px solid #bcb8b4;
  background: #e8e2dc;
}
.sheet {
  display: flex;
  flex-direction: column;
  flex: 1;
  min-height: 0;
  margin: 8px 10px 9px;
  box-shadow: 2px 1px 2px #777;
}
.general { padding: 3px 2px 9px 6px; }
h2 { padding-left: 6px; font: bold 14px/16px "DejaVu Sans Condensed", "Noto Sans", sans-serif; }
.box { border: 1px solid #808080; }
.general .box { height: 91px; margin-top: 3px; }
table { width: 100%; border-collapse: separate; border-spacing: 0; table-layout: fixed; }
th { font-weight: normal; text-align: left; }
td, th { height: 24px; padding: 0; white-space: nowrap; line-height: 14px; }
.persons td, .persons th { padding: 0 4px 3px; border: 2px solid transparent; background-clip: padding-box; }
.persons td { background-color: #ffffe0; }
.persons tbody th { padding: 0 0 0 19px; border: 0; }
.lead { display: flex; align-items: center; gap: 5px; height: 24px; }
.hot .lead { background: #ffecf4; }
.persons .hot td { background: #ffecf4; border-color: #ffecf4; }
.lead .sq { margin: 0 2px; }
.c-lead { width: 180px; }
.c-a { width: 149px; }
.c-b { width: 141px; }
.sq {
  display: block;
  width: 17px;
  height: 20px;
  border: 1px solid #777;
  box-shadow: inset 0 0 0 1px #fff;
  background: linear-gradient(#fffaf4, #f8f0ec 50%, #e6e1dc 50%, #dedad5);
}
.sq.focus { outline: 1px solid #0a7a0a; outline-offset: 1px; }

.split {
  display: grid;
  flex: 1;
  min-height: 0;
  grid-template-columns: minmax(0, 606fr) 8px minmax(0, 250fr);
  grid-template-rows: minmax(0, 1fr);
}
.pane { display: flex; flex-direction: column; min-height: 0; padding: 4px 3px 3px; }
.pane.second { padding: 4px 2px 3px 6px; }
.pane-head { display: flex; align-items: flex-end; justify-content: space-between; flex: none; height: 35px; padding: 0 4px 4px 3px; }
.second .pane-head { padding-left: 0; }
.unload {
  display: flex;
  align-items: center;
  width: 132px;
  height: 28px;
  margin-bottom: 3px;
  padding-left: 2px;
  border: 1px solid #b5b5ae;
  background: #eee8e2;
}
.scroll { display: flex; flex: 1; min-height: 0; }
.clip { flex: 1; min-width: 0; overflow: hidden; padding-top: 24px; }
.scrollbar { display: flex; flex-direction: column; flex: none; width: 16px; padding-right: 1px; background: #fdf8f0; }
.thumb { flex: 1; background: #d7d3cd; }
.clip + .scrollbar .thumb { margin-bottom: 32px; }
.long .thumb { margin-bottom: 72px; }
.scrollbar svg { width: 15px; }

.figures td { text-align: right; border: 2px solid transparent; background-clip: padding-box; }
.figures th { padding: 0 0 3px 6px; }
.figures td:nth-last-child(-n+2) { padding: 0 4px 3px; background-color: #ffffe0; }
.figures td:nth-child(-n+2):not(:nth-last-child(1)) { padding: 0; border-width: 1px 0 1px 1px; background: none; }
.c-plus { width: 20px; }
.c-sq { width: 19px; }
.c-v1 { width: 132px; }
.c-v2 { width: 159px; }
.c-v3 { width: 80px; }
.figures .hot > *:nth-child(n+2):nth-child(n) { background: #ffecf4; border-color: #ffecf4; }
.figures .blank td:nth-last-child(-n+2), .figures .empty td { background: none; }
.figures .sum > *:nth-child(n+2):nth-child(n) {
  border: 0 solid #fff;
  border-width: 1px 0;
  background: #bec8df;
}
.figures .sum th { font-weight: bold; padding-bottom: 4px; }
.figures .sum td:last-child:nth-child(n) { padding: 0 6px 4px 0; }
.plus {
  display: block;
  width: 9px;
  height: 9px;
  margin: 0 0 0 4px;
  border: 1px solid #8a8a86;
  background:
    linear-gradient(#1a3a9c, #1a3a9c) center / 5px 1px no-repeat,
    linear-gradient(#1a3a9c, #1a3a9c) center / 1px 5px no-repeat;
}
.vbar { display: flex; align-items: center; background: linear-gradient(90deg, #c4bfb9 15%, #e4dfd9 40%, #fbf2ea); }
.vbar button { width: 8px; height: 35px; border: 1px solid #555; border-right: 2px solid #000; background: #222; }
.vbar button::after { content: ""; display: block; width: 0; border: 3px solid transparent; border-left-color: #fff; border-right: 0; margin-left: 1px; }

/* form side */
.side { grid-column: 4; display: flex; flex-direction: column; min-width: 0; background: #fdfaf6; border-left: 1px solid #aaa; }
.side-title {
  display: flex;
  justify-content: space-between;
  flex: none;
  height: 18px;
  padding-right: 4px;
  background: linear-gradient(#f8d6e4 1px, #c9d6e8 1px, #d4deec 7px, #f8dbe6 7px, #f8dbe6 9px, #dfe6f2 9px, #e8edf6 14px, #fbe2ea 14px, #fbe2ea 16px, #eef2fa 16px);
  color: #444;
}
.side-tools { flex: none; padding: 3px 2px 2px; }
.strip {
  display: flex;
  align-items: center;
  width: 276px;
  height: 24px;
  border-radius: 3px;
  background: linear-gradient(#fdfefd, #edf2f8 45%, #fbdde8 45%, #fbdde8 52%, #dbe3f0 52%, #cdd8ea);
  box-shadow: 1px 0 0 #bcc3d0;
}
.strip button { display: flex; align-items: center; justify-content: center; gap: 6px; width: 29px; height: 16px; }
.strip button + button { border-left: 1px solid #bfc3cc; }
.strip .key { width: 77px; }
.strip .key:disabled { color: #777; }
.grip { width: 4px; height: 16px; margin-left: 2px; border-left: 2px dotted #b0b4c0; }
.viewer {
  flex: 1;
  min-height: 0;
  padding: 8px 12px 10px 17px;
  margin: 0 1px 5px 0;
  border: 1px solid #b9cde0;
  border-radius: 3px;
  background: #fff;
}
.preview { display: flex; height: 100%; box-shadow: 2px 2px 1px #8d8d8d; clip-path: inset(0 -4px -4px 0); }
.page { flex: 1; min-width: 0; overflow: hidden; }
.page-name { padding: 5px 0 0; line-height: 14px; }
.paper { width: 446px; margin: 16px 0 0 34px; font: 10px/12px "Liberation Sans", Arial, sans-serif; }
.paper-top { display: flex; justify-content: space-between; height: 24px; padding-left: 1px; }
.paper-top strong { align-self: flex-end; margin-left: auto; margin-right: 12px; font-size: 20px; line-height: 24px; }
.crop { width: 12px; height: 12px; border-top: 2px solid #000; border-left: 2px solid #000; }
.crop.end { border-left: 0; border-right: 2px solid #000; }
.paper > div:not(.paper-top) { width: 422px; margin-left: 12px; background: #cbc8c1; }
.val { display: block; height: 14px; padding-left: 2px; background: #fff; line-height: 12px; }
.no { flex: none; width: 12px; margin-left: -14px; margin-right: 2px; padding-right: 3px; font: bold 7px/14px "Liberation Sans", sans-serif; text-align: right; }
.f-head { display: flex; height: 76px; border-top: 1px solid #8f8d86; }
.f-title { width: 292px; border: 0 solid #8f8d86; border-width: 0 1px; }
.f-title h3 { padding: 1px 0 0 4px; font: bold 12px/16px "Liberation Sans", sans-serif; }
.opts { display: grid; grid-template-columns: 10px 121px 10px 1fr; column-gap: 7px; align-items: center; height: 20px; font-size: 8px; line-height: 8px; position: relative; white-space: nowrap; }
.opts .no { position: absolute; left: 0; }
.tick { width: 10px; height: 14px; background: #fff; font: 9px/10px "Liberation Sans", sans-serif; text-align: center; }
.taxno { display: flex; align-items: center; height: 19px; border-top: 1px solid #8f8d86; font-size: 7px; }
.taxno b { width: 73px; padding-left: 3px; }
.taxno .val { width: 154px; }
.num { font-size: 9px; }
.stamp { flex: 1; background: #fff; color: #8f8d86; font: 6px/6px "Liberation Sans", sans-serif; text-align: center; }
.office { display: flex; height: 55px; padding-right: 3px; border-top: 1px solid #8f8d86; border-left: 1px solid #8f8d86; }
.office-main { width: 300px; }
.office b { display: block; }
.office-main b { padding-left: 3px; font-size: 8px; line-height: 13px; }
.office-main .o2 { font-size: 7px; line-height: 10px; }
.line { display: flex; }
.line .val { flex: 1; }
.office .hint { flex: 1; align-self: flex-start; height: 31px; margin: 5px 0 0 2px; padding: 2px 3px; background: #8f8d86; color: #fff; font: bold 5px/7px "Liberation Sans", sans-serif; white-space: nowrap; overflow: hidden; }
.hint p { text-align-last: justify; }
.office .hint b { display: inline; }
.part { display: flex; height: 20px; border-top: 1px solid #8f8d86; border-left: 1px solid #8f8d86; }
.part-name { width: 89px; height: 9px; padding-left: 3px; background: #000; color: #fff; font-size: 8px; line-height: 9px; }
.part .no { order: -1; padding-top: 6px; }
.phone { width: 191px; margin-left: auto; }
.notes { display: grid; grid-template-columns: auto auto; justify-content: space-between; justify-items: start; height: 17px; padding-right: 3px; border-left: 1px solid #8f8d86; }
.notes .note:first-child { grid-column: 1 / 3; }
.note { padding: 0 3px; background: #fff; color: #85827b; font-size: 6px; line-height: 8px; white-space: nowrap; }
.note.framed { border: 1px solid #8f8d86; background: #cbc8c1; line-height: 7px; font-size: 5px; }
.notes.single { height: 10px; }
.rows { display: grid; grid-auto-rows: 21px 20px 20px; }
.row { display: flex; align-items: flex-start; gap: 15px; border-left: 1px solid #8f8d86; }
.row .no { margin-right: -13px; padding-top: 5px; }
.fld { display: flex; flex-direction: column; flex: none; }
.fld small { align-self: flex-start; min-height: 5px; padding: 0 3px; background: #fff; color: #85827b; font-size: 5px; line-height: 5px; white-space: nowrap; }
.fld.full { flex: 1; }
.last { width: 95px; margin-left: auto; }
.w46 { width: 46px; }
.w58 { width: 58px; }
.w70 { width: 70px; }
.w94 { width: 94px; }
.w138 { width: 138px; }
.w142 { width: 142px; }
.w239 { width: 239px; }
.w300 { width: 300px; }
.row.tall { align-items: flex-end; height: 32px; padding-bottom: 4px; }
.row.tall .no { padding-top: 0; }
.person { display: flex; }
.person .rows { width: 301px; }
.creed { flex: 1; padding-top: 6px; font: bold 7px/7px "Liberation Sans", sans-serif; text-align: right; white-space: nowrap; display: flex; flex-direction: column; align-items: flex-end; }
.creed p { padding-right: 1px; }
.creed > div { display: flex; align-items: center; gap: 5px; margin-top: 3px; }
.creed .val { width: 22px; font: 10px/13px "Liberation Sans", sans-serif; text-align: left; }
.remark { padding-left: 4px; border-left: 1px solid #8f8d86; color: #85827b; font-size: 6px; line-height: 9px; height: 9px; }

.side-tabs { display: flex; flex: none; height: 23px; border-top: 1px solid #e2ddd6; background: #fffdfb; }
.side-tabs button { display: flex; align-items: center; gap: 3px; height: 20px; padding: 0 2px 0 4px; border: 1px solid #e2ddd6; border-top: 0; background: #fff8f2; }
.side-tabs .active { height: 22px; padding: 2px 6px 0; background: #fff; }

.history { display: flex; flex: none; height: 21px; background: #fafffc; font-family: "DejaVu Sans Condensed", "Noto Sans", sans-serif; font-size: 11px; padding: 1px 0 0 24px; }
.history button { display: flex; align-items: center; justify-content: center; width: 19px; border-right: 1px solid #e0dbd4; background: #fdf7f0; }
.history .hist { justify-content: flex-start; gap: 26px; width: 110px; padding-left: 2px; }
.history .hist span { padding-top: 2px; }
.status { display: flex; align-items: center; justify-content: space-between; flex: none; height: 22px; padding: 0 2px 0 4px; border-top: 1px solid #dedad5; background: #fdf8f2; }
.status svg { width: 12px; height: 12px; align-self: flex-end; margin-bottom: 2px; }
```
